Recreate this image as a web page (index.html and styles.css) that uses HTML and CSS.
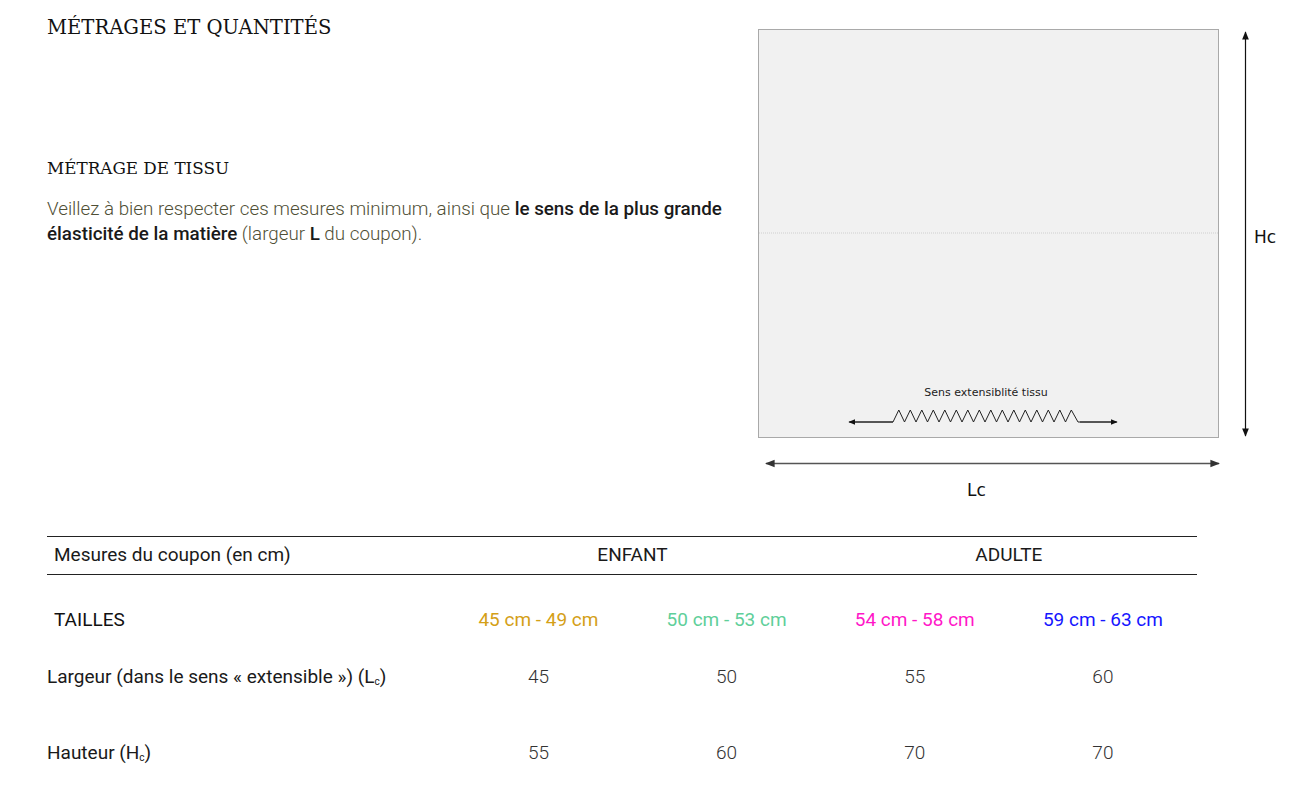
FILE: index.html
```html
<!DOCTYPE html>
<html lang="fr">
<head>
    <meta charset="UTF-8">
    <meta name="viewport" content="width=device-width, initial-scale=1.0">
    <title>Métrages et quantités</title>
    <link rel="stylesheet" href="styles.css">
</head>
<body>
    <div class="page">
        <section class="top">
            <div class="intro">
                <h1 class="title">MÉTRAGES ET QUANTITÉS</h1>
                <h2 class="subtitle">MÉTRAGE DE TISSU</h2>
                <p class="text">Veillez à bien respecter ces mesures minimum, ainsi que <strong>le sens de la plus grande élasticité de la matière</strong> (largeur <strong>L</strong> du coupon).</p>
            </div>

            <!-- schéma du coupon -->
            <svg class="diagram" viewBox="758 28 522 472" width="522" height="472">
                <defs>
                    <marker id="head" viewBox="0 0 10 10" refX="9" refY="5" markerWidth="7" markerHeight="7" orient="auto-start-reverse">
                        <path d="M0,1 L10,5 L0,9 z" fill="#111"/>
                    </marker>
                    <marker id="headGrey" viewBox="0 0 10 10" refX="9" refY="5" markerWidth="7" markerHeight="6" orient="auto-start-reverse">
                        <path d="M0,1 L10,5 L0,9 z" fill="#333"/>
                    </marker>
                </defs>
                <rect x="758.5" y="29.5" width="460" height="408" fill="#f1f1f1" stroke="#a9a9a9"/>
                <line x1="759" y1="233" x2="1218" y2="233" stroke="#cfcfcf" stroke-dasharray="1 1"/>

                <text x="986" y="396" class="small-label" text-anchor="middle">Sens extensiblité tissu</text>
                <polyline fill="none" stroke="#222" stroke-width="1"
                    points="850,422 893,422 898.8,410 904.5,422 910.3,410 916,422 921.8,410 927.5,422 933.3,410 939,422 944.8,410 950.5,422 956.3,410 962,422 967.8,410 973.5,422 979.3,410 985,422 990.8,410 996.5,422 1002.3,410 1008,422 1013.8,410 1019.5,422 1025.3,410 1031,422 1036.8,410 1042.5,422 1048.3,410 1054,422 1059.8,410 1065.5,422 1071.3,410 1078,422 1116,422"/>
                <line x1="893" y1="422" x2="849" y2="422" stroke="#222" marker-end="url(#head)"/>
                <line x1="1080" y1="422" x2="1117" y2="422" stroke="#222" marker-end="url(#head)"/>

                <line x1="1245.5" y1="32" x2="1245.5" y2="436" stroke="#111" stroke-width="1.2" marker-start="url(#head)" marker-end="url(#head)"/>
                <text x="1254" y="243" class="dim-label">Hc</text>

                <line x1="766" y1="463.5" x2="1219" y2="463.5" stroke="#555" stroke-width="1.6" marker-start="url(#headGrey)" marker-end="url(#headGrey)"/>
                <text x="967" y="496" class="dim-label">Lc</text>
            </svg>
        </section>

        <table class="sizes">
            <colgroup>
                <col class="col-label">
                <col class="col-size">
                <col class="col-size">
                <col class="col-size">
                <col class="col-size">
            </colgroup>
            <thead>
                <tr>
                    <th class="label-head">Mesures du coupon (en cm)</th>
                    <th colspan="2">ENFANT</th>
                    <th colspan="2">ADULTE</th>
                </tr>
            </thead>
            <tbody>
                <tr class="row-tailles">
                    <td class="label-head">TAILLES</td>
                    <td class="c-gold">45 cm - 49 cm</td>
                    <td class="c-green">50 cm - 53 cm</td>
                    <td class="c-pink">54 cm - 58 cm</td>
                    <td class="c-blue">59 cm - 63 cm</td>
                </tr>
                <tr class="row-largeur">
                    <td class="label">Largeur (dans le sens « extensible ») (L<sub>c</sub>)</td>
                    <td class="num">45</td>
                    <td class="num">50</td>
                    <td class="num">55</td>
                    <td class="num">60</td>
                </tr>
                <tr class="row-hauteur">
                    <td class="label">Hauteur (H<sub>c</sub>)</td>
                    <td class="num">55</td>
                    <td class="num">60</td>
                    <td class="num">70</td>
                    <td class="num">70</td>
                </tr>
            </tbody>
        </table>
    </div>
</body>
</html>
```

FILE: styles.css
```css
body {
    margin: 0;
    padding: 0;
    background: #fff;
    font-family: Roboto, 'Liberation Sans', sans-serif;
    color: #222;
}

.page {
    padding: 14px 0 0 47px;
}

.top {
    display: flex;
    align-items: flex-start;
}

.intro {
    flex: 0 0 711px;
}

.title {
    font-family: 'DejaVu Serif', 'Liberation Serif', serif;
    font-weight: normal;
    font-size: 19.6px;
    line-height: 28px;
    margin: 0;
    color: #111;
}

.subtitle {
    font-family: 'DejaVu Serif', 'Liberation Serif', serif;
    font-weight: normal;
    font-size: 16.8px;
    line-height: 24px;
    margin: 114px 0 0;
    color: #111;
}

.text {
    font-size: 18.8px;
    font-weight: 300;
    line-height: 25px;
    color: #4f4f36;
    margin: 17px 0 0;
    width: 700px;
}

.text strong {
    font-weight: 500;
    color: #1a1a1a;
}

.diagram {
    display: block;
    margin-top: 14px;
}

.small-label {
    font-family: 'DejaVu Sans', sans-serif;
    font-size: 11px;
    fill: #222;
}

.dim-label {
    font-family: 'DejaVu Sans', sans-serif;
    font-size: 17px;
    fill: #111;
}

/* tableau des mesures */
.sizes {
    border-collapse: collapse;
    margin-top: 36px;
    width: 1150px;
    font-size: 19px;
    line-height: 24px;
}

.col-label {
    width: 397px;
}

.col-size {
    width: 188px;
}

.sizes th {
    font-weight: normal;
    text-align: center;
    color: #1a1a1a;
    padding: 6px 0 7px;
    border-top: 1px solid #222;
    border-bottom: 1px solid #222;
}

.sizes th.label-head,
.sizes td.label-head {
    text-align: left;
    padding-left: 7px;
}

.sizes td {
    text-align: center;
    vertical-align: top;
    padding: 0;
}

.row-tailles td {
    padding-top: 33px;
    padding-bottom: 9px;
}

.row-tailles td.label-head {
    color: #111;
}

.row-largeur td {
    padding-top: 24px;
    padding-bottom: 12px;
}

.row-hauteur td {
    padding-top: 40px;
    padding-bottom: 20px;
}

.sizes td.label {
    text-align: left;
    color: #1a1a1a;
}

.sizes sub {
    font-size: 10px;
    vertical-align: -2px;
    line-height: 0;
}

.num {
    font-weight: 300;
    color: #333;
}

.c-gold {
    color: #d4a017;
}

.c-green {
    color: #5fcf9a;
}

.c-pink {
    color: #ff17c8;
}

.c-blue {
    color: #1616ff;
}
```
